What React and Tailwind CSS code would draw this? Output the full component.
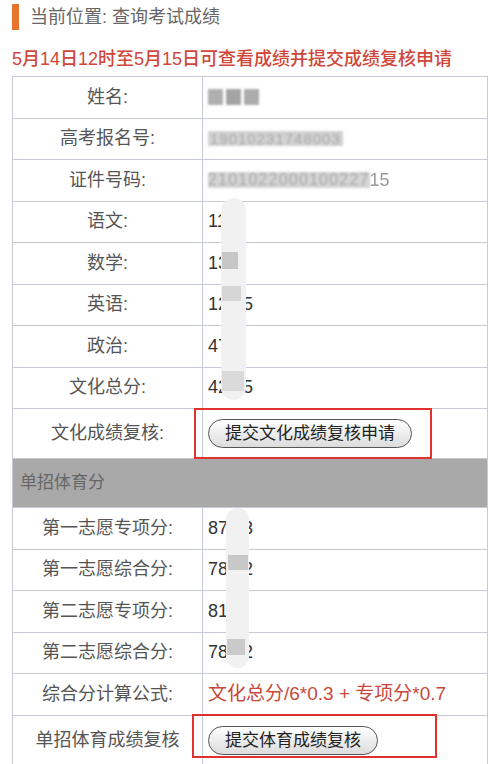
import React from "react";

const FONT = { fontFamily: '"Liberation Sans", "Noto Sans CJK SC", sans-serif' };

const Row = ({ label, children, tall }) => (
  <div
    className={`flex border-t-[1.5px] border-[#c6cad8] ${
      tall ? "h-[50px]" : "h-[41.5px]"
    }`}
  >
    <div className="w-[190px] shrink-0 border-r-[1.5px] border-[#c6cad8] flex items-center justify-center text-[18px] text-[#555]">
      {label}
    </div>
    <div className="relative flex-1 flex items-center pl-[5px] text-[18px] text-[#333]">
      {children}
    </div>
  </div>
);

const ReviewButton = ({ children }) => (
  <button className="h-[29px] px-[16px] rounded-full border-[1.5px] border-[#555] bg-gradient-to-b from-white to-[#dcdcdc] text-[17px] text-[#222] leading-none shadow-[inset_0_1px_0_#fff]">
    {children}
  </button>
);

export default function App() {
  return (
    <div className="relative w-[500px] h-[764px] bg-white overflow-hidden" style={FONT}>
      {/* 面包屑 */}
      <div className="flex items-center h-[26px] mt-[4px] pl-[12px]">
        <div className="w-[7px] h-[26px] bg-[#e8732a]" />
        <span className="ml-[11px] text-[18px] text-[#666]">当前位置: 查询考试成绩</span>
      </div>

      <div className="mt-[18px] pl-[12px] text-[18px] leading-[22px] text-[#d0473a] font-medium">
        5月14日12时至5月15日可查看成绩并提交成绩复核申请
      </div>

      <div className="mt-[6px] mx-[12px] border-l-[1.5px] border-r-[1.5px] border-b-[1.5px] border-[#c6cad8]">
        <Row label="姓名:">
          <div className="flex gap-[3px] blur-[1.2px]">
            <span className="w-[15px] h-[16px] bg-[#b0b0b0]" />
            <span className="w-[15px] h-[16px] bg-[#a4a4a4]" />
            <span className="w-[15px] h-[16px] bg-[#acacac]" />
          </div>
        </Row>
        <Row label="高考报名号:">
          <span className="blur-[1px] bg-[#d2d2d2] text-[#a9a9a9] text-[15px] leading-[15px] px-[2px] tracking-[1px]">
            19010231748003
          </span>
        </Row>
        <Row label="证件号码:">
          <span className="blur-[1.2px] bg-[#d4d4d4] text-[#a8a8a8] text-[16px] leading-[16px] tracking-[1.2px]">
            2101022000100227
          </span>
          <span className="text-[#9a9a9a] blur-[0.6px]">15</span>
        </Row>
        <Row label="语文:">110</Row>
        <Row label="数学:">130</Row>
        <Row label="英语:">120.5</Row>
        <Row label="政治:">47</Row>
        <Row label="文化总分:">420.5</Row>
        <Row label="文化成绩复核:" tall>
          <ReviewButton>提交文化成绩复核申请</ReviewButton>
          <div className="absolute left-[-9px] top-[-1px] w-[238px] h-[51px] border-2 border-[#e0312c]" />
        </Row>

        <div className="h-[49px] border-t-[1.5px] border-[#c6cad8] bg-[#a9a9a9] flex items-center pl-[7px] text-[17px] text-[#666]">
          单招体育分
        </div>

        <Row label="第一志愿专项分:">87.33</Row>
        <Row label="第一志愿综合分:">78.52</Row>
        <Row label="第二志愿专项分:">81.4</Row>
        <Row label="第二志愿综合分:">78.52</Row>
        <Row label="综合分计算公式:">
          <span className="text-[#c8493a] text-[19px]">文化总分/6*0.3 + 专项分*0.7</span>
        </Row>
        <Row label="单招体育成绩复核" tall>
          <ReviewButton>提交体育成绩复核</ReviewButton>
          <div className="absolute left-[-11px] top-[-2px] w-[245px] h-[44px] border-2 border-[#e0312c]" />
        </Row>
      </div>

      {/* 打码涂抹 */}
      <div className="absolute left-[221px] top-[198px] w-[25px] h-[202px] rounded-full bg-[#f1f1f1]" />
      <div className="absolute left-[222px] top-[252px] w-[16px] h-[17px] bg-[#c6c6c6]" />
      <div className="absolute left-[222px] top-[286px] w-[19px] h-[15px] bg-[#d6d6d6]" />
      <div className="absolute left-[222px] top-[371px] w-[22px] h-[20px] bg-[#dadada]" />

      <div className="absolute left-[226px] top-[508px] w-[23px] h-[160px] rounded-full bg-[#f1f1f1]" />
      <div className="absolute left-[228px] top-[555px] w-[20px] h-[15px] bg-[#c8c8c8]" />
      <div className="absolute left-[227px] top-[639px] w-[18px] h-[16px] bg-[#cacaca]" />
    </div>
  );
}
